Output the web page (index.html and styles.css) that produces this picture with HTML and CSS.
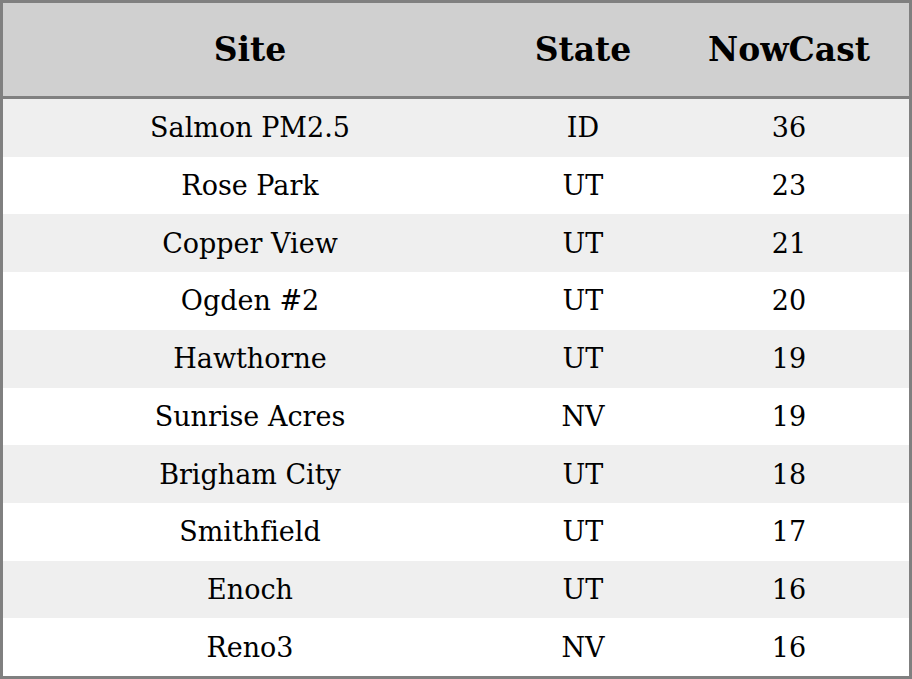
FILE: index.html
```html
<!DOCTYPE html>
<html>
<head>
<meta charset="utf-8">
<link rel="stylesheet" href="styles.css">
</head>
<body>
<div class="table">
  <div class="row head"><div>Site</div><div>State</div><div>NowCast</div></div>
  <div class="row odd"><div>Salmon PM2.5</div><div>ID</div><div>36</div></div>
  <div class="row"><div>Rose Park</div><div>UT</div><div>23</div></div>
  <div class="row odd"><div>Copper View</div><div>UT</div><div>21</div></div>
  <div class="row"><div>Ogden #2</div><div>UT</div><div>20</div></div>
  <div class="row odd"><div>Hawthorne</div><div>UT</div><div>19</div></div>
  <div class="row"><div>Sunrise Acres</div><div>NV</div><div>19</div></div>
  <div class="row odd"><div>Brigham City</div><div>UT</div><div>18</div></div>
  <div class="row"><div>Smithfield</div><div>UT</div><div>17</div></div>
  <div class="row odd"><div>Enoch</div><div>UT</div><div>16</div></div>
  <div class="row"><div>Reno3</div><div>NV</div><div>16</div></div>
</div>
</body>
</html>
```
FILE: styles.css
```css
html, body { margin: 0; padding: 0; }
body {
  font-family: "DejaVu Serif", serif;
  color: #000;
  font-variant-ligatures: none;
}
.table {
  box-sizing: border-box;
  width: 912px;
  height: 679px;
  border: 3px solid #808080;
  display: grid;
  grid-template-rows: 96px repeat(10, 1fr);
}
.row {
  display: grid;
  grid-template-columns: 494px 172px 240px;
  align-items: center;
  font-size: 27px;
  background: #fff;
}
.row > div { text-align: center; }
.row.odd { background: #efefef; }
.row.head {
  background: #d0d0d0;
  border-bottom: 3px solid #808080;
  font-weight: bold;
  font-size: 33px;
}
```
